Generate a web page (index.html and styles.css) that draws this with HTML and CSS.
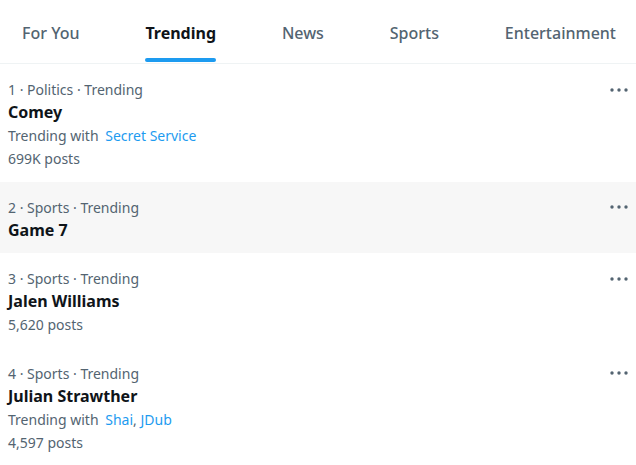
FILE: index.html
```html
<!DOCTYPE html>
<html lang="en">
<head>
<meta charset="utf-8">
<title>Trending</title>
<link rel="stylesheet" href="styles.css">
</head>
<body>
<nav class="tabs">
  <a class="tab"><span class="label">For You</span></a>
  <a class="tab active"><span class="label">Trending</span><span class="indicator"></span></a>
  <a class="tab"><span class="label">News</span></a>
  <a class="tab"><span class="label">Sports</span></a>
  <a class="tab"><span class="label">Entertainment</span></a>
</nav>
<main class="list">
  <div class="trend">
    <div class="body">
      <div class="meta">1 · Politics · Trending</div>
      <div class="title">Comey</div>
      <div class="meta">Trending with <a class="link">Secret Service</a></div>
      <div class="meta">699K posts</div>
    </div>
    <button class="more"><svg viewBox="0 0 18 4" width="18" height="4"><circle cx="2" cy="2" r="1.7"/><circle cx="9" cy="2" r="1.7"/><circle cx="16" cy="2" r="1.7"/></svg></button>
  </div>
  <div class="trend hover">
    <div class="body">
      <div class="meta">2 · Sports · Trending</div>
      <div class="title">Game 7</div>
    </div>
    <button class="more"><svg viewBox="0 0 18 4" width="18" height="4"><circle cx="2" cy="2" r="1.7"/><circle cx="9" cy="2" r="1.7"/><circle cx="16" cy="2" r="1.7"/></svg></button>
  </div>
  <div class="trend">
    <div class="body">
      <div class="meta">3 · Sports · Trending</div>
      <div class="title">Jalen Williams</div>
      <div class="meta">5,620 posts</div>
    </div>
    <button class="more"><svg viewBox="0 0 18 4" width="18" height="4"><circle cx="2" cy="2" r="1.7"/><circle cx="9" cy="2" r="1.7"/><circle cx="16" cy="2" r="1.7"/></svg></button>
  </div>
  <div class="trend">
    <div class="body">
      <div class="meta">4 · Sports · Trending</div>
      <div class="title">Julian Strawther</div>
      <div class="meta">Trending with <a class="link">Shai</a>, <a class="link tight">JDub</a></div>
      <div class="meta">4,597 posts</div>
    </div>
    <button class="more"><svg viewBox="0 0 18 4" width="18" height="4"><circle cx="2" cy="2" r="1.7"/><circle cx="9" cy="2" r="1.7"/><circle cx="16" cy="2" r="1.7"/></svg></button>
  </div>
</main>
</body>
</html>
```
FILE: styles.css
```css
* { box-sizing: border-box; }
html, body {
  margin: 0;
  background: #ffffff;
  font-family: "Noto Sans", "Open Sans", sans-serif;
  color: #0f1419;
  overflow: hidden;
}
.tabs {
  display: flex;
  justify-content: space-between;
  height: 64px;
  padding: 0 20px 0 22px;
  border-bottom: 1px solid #eff3f4;
}
.tab {
  display: flex;
  flex-direction: column;
  padding-top: 23px;
  font-size: 16px;
  font-weight: 500;
  color: #536471;
  line-height: 20px;
  white-space: nowrap;
}
.tab.active {
  color: #0f1419;
  font-weight: 700;
}
.indicator {
  height: 4px;
  margin-top: 15px;
  border-radius: 9999px;
  background: #1d9bf0;
}
.trend {
  display: flex;
  align-items: flex-start;
  padding: 14px 8px 11.5px 8px;
}
.trend.hover { background: #f7f7f7; }
.body { flex: 1; }
.meta {
  font-size: 14px;
  line-height: 23px;
  color: #536471;
}
.title {
  font-size: 16px;
  font-weight: 700;
  line-height: 23px;
  color: #0f1419;
}
.link { color: #1d9bf0; margin-left: 3px; }
.link.tight { margin-left: 0; }
.more {
  border: 0;
  background: none;
  padding: 0;
  height: 23px;
  width: 18px;
  display: flex;
  align-items: center;
  fill: #536471;
}
```
